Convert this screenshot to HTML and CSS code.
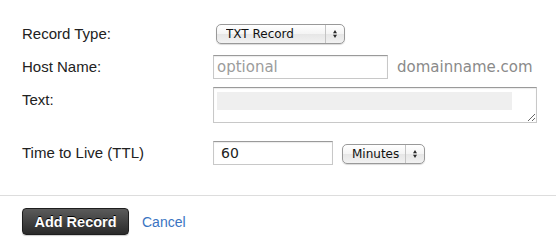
FILE: index.html
```html
<!DOCTYPE html>
<html>
<head>
<meta charset="utf-8">
<title>Add Record</title>
<link rel="stylesheet" href="styles.css">
</head>
<body>
<form class="record_form">
	<div class="fields">
		<div class="row row_type">
			<label>Record Type:</label>
			<span class="select select_type">
				<select><option>TXT Record</option><option>A Record</option><option>CNAME Record</option></select>
				<svg class="arrows" width="18" height="18" viewBox="0 0 18 18"><path d="M9 5 L11 8.2 L7 8.2 Z M9 13 L11 9.8 L7 9.8 Z" fill="#2a2a2a"/></svg>
			</span>
		</div>
		<div class="row row_host">
			<label>Host Name:</label>
			<input class="text host" type="text" placeholder="optional">
			<span class="domain">domainname.com</span>
		</div>
		<div class="row row_text">
			<label>Text:</label>
			<textarea class="txt"></textarea>
		</div>
		<div class="row row_ttl">
			<label>Time to Live (TTL)</label>
			<input class="text ttl" type="text" value="60">
			<span class="select select_unit">
				<select><option>Minutes</option><option>Hours</option></select>
				<svg class="arrows" width="18" height="18" viewBox="0 0 18 18"><path d="M9 5 L11 8.2 L7 8.2 Z M9 13 L11 9.8 L7 9.8 Z" fill="#2a2a2a"/></svg>
			</span>
		</div>
	</div>
	<div class="actions">
		<button type="button" class="add">Add Record</button>
		<a href="#" class="cancel">Cancel</a>
	</div>
</form>
</body>
</html>
```
FILE: styles.css
```css
body {
	margin: 0;
	background: #fff;
	font-family: "Liberation Sans", Arial, sans-serif;
	font-size: 15px;
	color: #222;
}
.fields {
	padding: 24px 0 30px 22px;
	border-bottom: 1px solid #ddd;
}
.row {
	display: flex;
	align-items: center;
}
.row label {
	width: 191px;
	line-height: 16px;
	flex: none;
}
.row_type {
	height: 20px;
}
.row_host {
	margin-top: 11px;
}
.row_text {
	margin-top: 8px;
	align-items: flex-start;
}
.row_text label {
	padding-top: 5px;
}
.row_ttl {
	margin-top: 18px;
}
.select {
	position: relative;
	display: inline-block;
}
.select select {
	-webkit-appearance: none;
	appearance: none;
	display: block;
	box-sizing: border-box;
	height: 20px;
	margin: 0;
	padding: 0 0 0 9px;
	border: 1px solid #999;
	border-radius: 5px;
	background: linear-gradient(#ffffff 0%, #f4f4f4 50%, #e6e6e6 51%, #f2f2f2 100%);
	box-shadow: 0 1px 1px rgba(0,0,0,0.15);
	font-family: "DejaVu Sans", Verdana, sans-serif;
	font-size: 12px;
	color: #111;
	outline: none;
}
.select .arrows {
	position: absolute;
	right: 1px;
	top: 1px;
	border-left: 1px solid #c4c4c4;
	pointer-events: none;
}
.select_type {
	margin-left: 3px;
}
.select_type select {
	width: 129px;
}
.select_unit {
	margin-left: 9px;
	margin-top: 1px;
}
.select_unit select {
	width: 83px;
}
.text, .txt {
	box-sizing: border-box;
	margin: 0;
	border: 1px solid #c8c8c8;
	border-top-color: #9a9a9a;
	box-shadow: inset 0 1px 1px rgba(0,0,0,0.08);
	font-family: "DejaVu Sans", Verdana, sans-serif;
	outline: none;
}
.text {
	height: 24px;
	padding: 0 3px;
	color: #222;
	font-size: 14px;
}
.host {
	width: 175px;
	font-size: 15px;
}
.host::placeholder {
	color: #9c9c9c;
}
.domain {
	margin-left: 9px;
	font-family: "DejaVu Sans", Verdana, sans-serif;
	font-size: 15px;
	color: #8a8a8a;
}
.txt {
	width: 324px;
	height: 36px;
	padding: 3px;
	background: #fff linear-gradient(#efefef, #efefef) no-repeat 3px 4px / 295px 18px;
}
.ttl {
	width: 120px;
	padding-left: 7px;
}
.actions {
	display: flex;
	align-items: center;
	gap: 13px;
	padding: 12px 22px;
}
.add {
	box-sizing: border-box;
	width: 107px;
	height: 27px;
	border: 1px solid #1e1e1e;
	border-radius: 4px;
	background: linear-gradient(#5b5b5b, #2a2a2a);
	box-shadow: 0 1px 1px rgba(0,0,0,0.2);
	color: #fff;
	font-family: "Liberation Sans", Arial, sans-serif;
	font-weight: bold;
	font-size: 14.5px;
	text-shadow: 0 -1px 0 #000;
	padding: 0;
}
.cancel {
	color: #3a74c2;
	text-decoration: none;
	font-size: 14px;
}
```
